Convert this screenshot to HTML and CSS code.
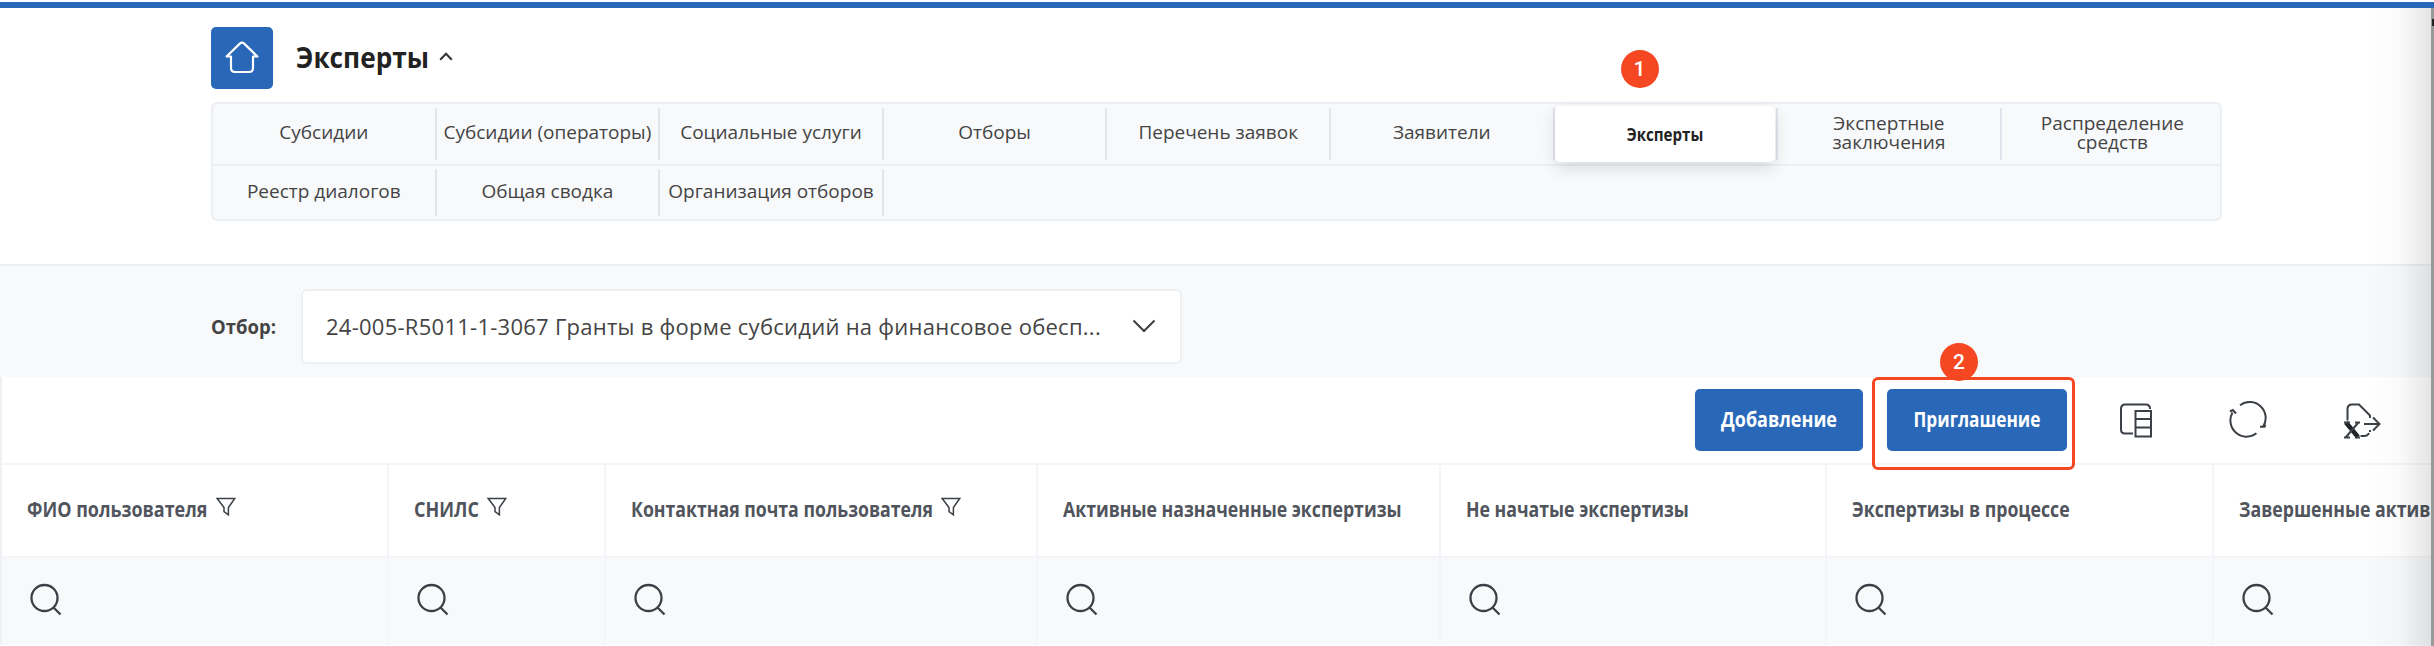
FILE: index.html
```html
<!DOCTYPE html>
<html lang="ru">
<head>
<meta charset="utf-8">
<title>Эксперты</title>
<link rel="stylesheet" href="styles.css">
</head>
<body>
<svg class="defs" width="0" height="0">
  <symbol id="search" viewBox="0 0 34 34"><circle cx="15.5" cy="15" r="13"/><path d="M24.5 24.5L31.5 31.5"/></symbol>
  <symbol id="funnel" viewBox="0 0 20 20"><path d="M1.2 1.5H18.8L12.4 10.5V17.8L8 14.5V10.5Z"/></symbol>
</svg>
<div class="page">
  <header class="head">
    <div class="title-row">
      <a class="home"><svg width="36" height="36" viewBox="0 0 36 36"><path d="M7 16.5H2.6L15.8 3.6Q18 1.8 20.2 3.6L33.4 16.5H29V28Q29 32 25 32H11Q7 32 7 28Z"/></svg></a>
      <h1 class="title">Эксперты</h1>
      <svg class="caret" width="14" height="9" viewBox="0 0 14 9"><path d="M1.2 7.8L7 1.8L12.8 7.8"/></svg>
    </div>
    <nav class="nav">
      <div class="nav-row first">
        <div class="tab">Субсидии</div>
        <div class="tab">Субсидии (операторы)</div>
        <div class="tab">Социальные услуги</div>
        <div class="tab">Отборы</div>
        <div class="tab">Перечень заявок</div>
        <div class="tab">Заявители</div>
        <div class="tab current"><span class="pill"><span class="pill-text">Эксперты</span></span><span class="badge one">1</span></div>
        <div class="tab">Экспертные<br>заключения</div>
        <div class="tab">Распределение<br>средств</div>
      </div>
      <div class="nav-row second">
        <div class="tab">Реестр диалогов</div>
        <div class="tab">Общая сводка</div>
        <div class="tab">Организация отборов</div>
      </div>
    </nav>
  </header>
  <section class="filter">
    <label class="label">Отбор:</label>
    <div class="select"><span class="value">24-005-R5011-1-3067 Гранты в форме субсидий на финансовое обесп...</span>
      <svg width="24" height="14" viewBox="0 0 24 14"><path d="M1.5 1.5L12 12L22.5 1.5"/></svg></div>
  </section>
  <section class="toolbar">
    <button class="btn add"><span>Добавление</span></button>
    <div class="invite"><button class="btn inv"><span>Приглашение</span></button><span class="frame"></span><span class="badge two">2</span></div>
    <div class="tools">
      <svg width="36" height="38" viewBox="0 0 36 38"><path d="M15 32.5H7Q3 32.5 3 28.5V8Q3 3.5 7 3.5H28Q32 3.5 32 8M17.500 10H33V35.500H17.500ZM17.500 18H33M17.500 26.500H33"/></svg>
      <svg width="40" height="38" viewBox="0 0 40 38"><path d="M12 4.200A16 16 0 0 1 35.200 25.500M28.500 32.300A16.200 16.200 0 0 1 4.500 11.500M2 10.500L4.800 9L8 12.500M32 25.800H36.500L37.500 23.500"/></svg>
      <svg width="40" height="40" viewBox="0 0 40 40"><path d="M5.500 19.500V8Q5.500 3.500 10 3.500H17L28 14.500V17M22 23H37M31 16.500L37.500 23L31 29.500M28 29V31M18.500 35H22Q26 35 27 32"/><path d="M4 21.500L16 36" class="heavy"/><path d="M2 21.500H8M13 21.500H18M2 36.500H8M13 36.500H18M16 22L4 36"/></svg>
    </div>
  </section>
  <div class="grid headings">
    <div class="cell"><span class="name fio">ФИО пользователя</span><svg class="fn"><use href="#funnel"/></svg></div>
    <div class="cell"><span class="name snils">СНИЛС</span><svg class="fn"><use href="#funnel"/></svg></div>
    <div class="cell"><span class="name mail">Контактная почта пользователя</span><svg class="fn"><use href="#funnel"/></svg></div>
    <div class="cell"><span class="name">Активные назначенные экспертизы</span></div>
    <div class="cell"><span class="name">Не начатые экспертизы</span></div>
    <div class="cell"><span class="name">Экспертизы в процессе</span></div>
    <div class="cell"><span class="name">Завершенные актив</span></div>
  </div>
  <div class="grid searches">
    <div class="cell"><svg class="sr"><use href="#search"/></svg></div>
    <div class="cell"><svg class="sr"><use href="#search"/></svg></div>
    <div class="cell"><svg class="sr"><use href="#search"/></svg></div>
    <div class="cell"><svg class="sr"><use href="#search"/></svg></div>
    <div class="cell"><svg class="sr"><use href="#search"/></svg></div>
    <div class="cell"><svg class="sr"><use href="#search"/></svg></div>
    <div class="cell"><svg class="sr"><use href="#search"/></svg></div>
  </div>
  <div class="edge-shadow"></div>
  <div class="edge-mark"></div>
</div>
</body>
</html>
```
FILE: styles.css
```css
* { box-sizing: border-box; }
body { margin: 0; background: #fff; font-family: "Open Sans", "Noto Sans", sans-serif; color: #444; }
svg { fill: none; stroke: #3b4046; stroke-width: 2; flex: none; }
.defs { position: absolute; }
.page { position: relative; width: 2434px; height: 646px; padding-top: 2px; overflow: hidden; }

.head { height: 262px; border-top: 6px solid #2968b8; padding: 19px 0 0 211px; }
.title-row { display: flex; align-items: center; height: 62px; }
.home { width: 62px; height: 62px; border-radius: 5px; background: #2968b8; display: flex; align-items: center; justify-content: center; }
.home svg { stroke: #fff; stroke-width: 2.2; stroke-linejoin: round; }
.title { margin: 0 10px 2px 23px; width: 133px; font-size: 28px; line-height: 38px; font-weight: 700; color: #222; white-space: nowrap; transform: scaleX(.936); transform-origin: left; }
.caret { margin-top: -4px; stroke: #333; }

.nav { margin-top: 13px; width: 2011px; height: 119px; border: 2px solid #eceff3; border-radius: 6px; background: #f8f9fb; }
.nav-row { display: grid; grid-template-columns: repeat(8, 223.6px) 1fr; }
.first { height: 62px; border-bottom: 2px solid #eceff3; padding: 4px 0; }
.second { height: 53px; padding: 3px 0; }
.tab { position: relative; display: flex; align-items: center; justify-content: center; text-align: center; border-right: 2px solid #e2e5ec; padding-bottom: 3px; font-size: 19px; line-height: 19px; font-weight: 500; white-space: nowrap; }
.first .tab:last-child { border-right: 0; padding-left: 3px; }
.pill { position: absolute; inset: -2px 1px -2px 0; display: flex; align-items: center; justify-content: center; padding-bottom: 2px; border-radius: 5px; background: #fff; box-shadow: 0 6px 16px rgba(0,0,0,.12); font-weight: 700; color: #222; }
.pill-text { font-size: 18.5px; transform: scaleX(.815); }
.badge { position: absolute; width: 38px; height: 38px; border-radius: 50%; background: #f54822; color: #fff; font: 500 21px/38px Roboto, sans-serif; text-align: center; }
.one { left: 66px; top: -58px; }

.filter { height: 113px; border-top: 2px solid #edf0f2; background: #f8f9fb; padding-left: 211px; display: flex; align-items: flex-start; }
.label { width: 90px; padding-top: 47px; font-size: 20px; line-height: 28px; font-weight: 700; transform: scaleX(.926); transform-origin: left; }
.select { margin-top: 23px; width: 881px; height: 75px; border: 2px solid #edf0f2; border-radius: 6px; background: #fff; padding: 0 24px 2px 23px; display: flex; align-items: center; justify-content: space-between; }
.value { font-size: 22px; letter-spacing: .26px; white-space: nowrap; }

.toolbar { height: 86px; display: flex; align-items: flex-start; padding: 12px 0 0 1693px; border-left: 2px solid #f0f1f4; }
.btn { height: 62px; border: 0; padding: 0 0 2px; border-radius: 5px; background: #2968b8; color: #fff; font: 700 20.5px/30px "Open Sans", sans-serif; }
.btn span { display: block; margin: 0 -10px; transform: scaleX(.877); }
.add { width: 168px; }
.invite { position: relative; margin-left: 24px; }
.inv { width: 180px; }
.inv span { transform: scaleX(.842); }
.frame { position: absolute; inset: -12px -8px -19px -15px; border: 3px solid #f54822; border-radius: 6px; }
.two { left: 53px; top: -46px; }
.tools { display: flex; margin-left: 51px; gap: 74px; padding-top: 12px; }
.tools .heavy { stroke-width: 4.5; stroke: #202428; }

.grid { display: grid; grid-template-columns: 387px 216.5px 432.5px 402.5px 386.5px 386.5px 1fr; border-top: 2px solid #f4f5f8; border-left: 2px solid #f0f1f4; }
.headings { height: 93px; font-size: 20.5px; line-height: 28px; font-weight: 700; color: #50545c; white-space: nowrap; }
.searches { height: 89px; background: #f8f9fb; }
.cell { border-right: 2px solid #f4f5f8; padding: 0 0 3px 25px; display: flex; align-items: center; }
.cell:last-child { border: 0; }
.name { transform: scaleX(.863); transform-origin: left; }
.fio { width: 180.5px; transform: scaleX(.875); }
.snils { width: 65px; transform: scaleX(.878); }
.mail { width: 302px; }
.fn { width: 20px; height: 20px; margin: -4px 0 0 8px; stroke-width: 1.5; }
.sr { width: 34px; height: 34px; margin-left: 2px; stroke-width: 2.3; }
.edge-shadow { position: absolute; top: 8px; right: 0; bottom: 0; width: 66px; border-right: 3px solid #999; background: linear-gradient(to right, transparent, rgba(0,0,0,.02) 50%, rgba(0,0,0,.1)); }
.edge-mark { position: absolute; top: 19px; right: 0; width: 2px; height: 7px; background: #222; }
```
